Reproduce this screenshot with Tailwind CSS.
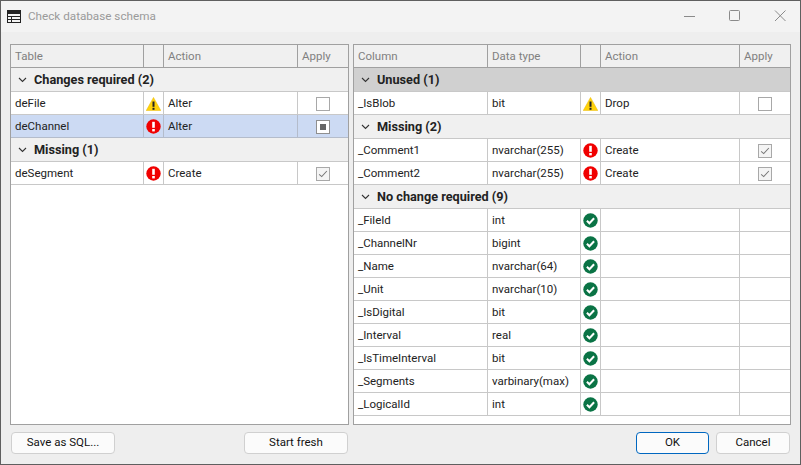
<!DOCTYPE html>
<html lang="en">
<head>
    <meta charset="UTF-8">
    <title>Check database schema</title>
    <script src="https://cdn.jsdelivr.net/npm/@tailwindcss/browser@4"></script>
</head>
<body class="bg-[#eeeeee]">
    <svg width="0" height="0" class="absolute">
        <symbol id="warn" viewBox="0 0 15 14">
            <path d="M7.500 .4 14.800 13.600H.2Z" fill="#ffd20a" stroke="#e8b900" stroke-width=".5"/>
            <rect x="6.500" y="4.500" width="2" height="5.300" fill="#222"/>
            <rect x="6.500" y="10.800" width="2" height="2" fill="#222"/>
        </symbol>
        <symbol id="err" viewBox="0 0 15 15">
            <circle cx="7.500" cy="7.500" r="7.200" fill="#f00000"/>
            <rect x="6.200" y="2.800" width="2.600" height="6" fill="#fff"/>
            <rect x="6.200" y="10" width="2.600" height="2.400" fill="#fff"/>
        </symbol>
        <symbol id="ok" viewBox="0 0 15 15">
            <circle cx="7.500" cy="7.500" r="7.200" fill="#0a7345"/>
            <path d="M3.900 7.700 6.400 10.200 11.100 5.200" fill="none" stroke="#fff" stroke-width="2"/>
        </symbol>
        <symbol id="chev" viewBox="0 0 9 6">
            <path d="M1 1 4.500 4.500 8 1" fill="none" stroke="#333" stroke-width="1.100"/>
        </symbol>
        <symbol id="tick" viewBox="0 0 14 14">
            <path d="M2.500 7.500 5.500 10 11.500 3.500" fill="none" stroke="#777" stroke-width="1.200"/>
        </symbol>
    </svg>

    <div class="w-[801px] h-[465px] box-border border border-[#5f5f5f] flex flex-col overflow-hidden text-[11.500px] text-[#222222] font-['Roboto',sans-serif]">
        <!-- title bar -->
        <div class="h-[31px] shrink-0 bg-[#f3f3f3] flex items-center pl-[6px]">
            <svg width="14" height="13" viewBox="0 0 14 13" class="mt-[-1px]">
                <rect width="14" height="13" fill="#222"/>
                <path d="M1 4h12v2H1zM1 7h3v2H1zM5 7h8v2H5zM1 10h3v2H1zM5 10h8v2H5z" fill="#f3f3f3"/>
            </svg>
            <span class="ml-[7px] mt-[1px] text-[#9a9a9a] text-[11.700px]">Check database schema</span>
            <svg width="103" height="12" viewBox="0 0 103 12" class="ml-auto mr-[13px] mt-[-2px]">
                <path d="M0 6.500H11" stroke="#8a8a8a" fill="none"/>
                <rect x="45.500" y=".5" width="10" height="10" rx="1" stroke="#8a8a8a" fill="none"/>
                <path d="M91 .5 101.500 11M101.500 .5 91 11" stroke="#8a8a8a" fill="none"/>
            </svg>
        </div>

        <div class="flex-1 flex flex-col px-[9px] pt-[12px]">
            <div class="flex gap-[4px]">
                <!-- tables -->
                <div class="w-[339px] h-[381px] box-border border border-[#a0a0a0] bg-white">
                    <div class="h-[23px] box-border border-b border-[#a0a0a0] bg-[#f0f0f0] text-[#808080] grid grid-cols-[133px_20px_134px_50px]">
                        <div class="border-r border-[#a0a0a0] pl-[4px] leading-[22px]">Table</div>
                        <div class="border-r border-[#a0a0a0]"></div>
                        <div class="border-r border-[#a0a0a0] pl-[4px] leading-[22px]">Action</div>
                        <div class="pl-[4px] leading-[22px]">Apply</div>
                    </div>
                    <div class="h-[24px] box-border border-b border-[#c8c8c8] bg-[#f0f0f0] flex items-center pl-[7px] font-bold text-[12.700px]">
                        <svg width="9" height="6"><use href="#chev"/></svg><span class="ml-[7px]">Changes required (2)</span>
                    </div>
                    <div class="h-[23px] box-border border-b border-[#c8c8c8] grid grid-cols-[133px_20px_134px_50px]">
                        <div class="border-r border-[#c8c8c8] pl-[4px] leading-[23px]">deFile</div>
                        <div class="border-r border-[#c8c8c8] flex items-center justify-center"><svg width="15" height="14"><use href="#warn"/></svg></div>
                        <div class="border-r border-[#c8c8c8] pl-[4px] leading-[23px]">Alter</div>
                        <div class="flex items-center justify-center"><div class="w-[14px] h-[14px] box-border border border-[#a8a8a8] bg-white"></div></div>
                    </div>
                    <div class="h-[23px] box-border border-b border-[#b4bccb] bg-[#ccdaf3] grid grid-cols-[133px_20px_134px_50px]">
                        <div class="border-r border-[#b4bccb] pl-[4px] leading-[23px]">deChannel</div>
                        <div class="border-r border-[#b4bccb] flex items-center justify-center"><svg width="15" height="15"><use href="#err"/></svg></div>
                        <div class="border-r border-[#b4bccb] pl-[4px] leading-[23px]">Alter</div>
                        <div class="flex items-center justify-center"><div class="w-[14px] h-[14px] box-border border border-[#8f8f8f] bg-white flex items-center justify-center"><div class="w-[6px] h-[6px] bg-[#666666]"></div></div></div>
                    </div>
                    <div class="h-[24px] box-border border-b border-[#c8c8c8] bg-[#f0f0f0] flex items-center pl-[7px] font-bold text-[12.700px]">
                        <svg width="9" height="6"><use href="#chev"/></svg><span class="ml-[7px]">Missing (1)</span>
                    </div>
                    <div class="h-[23px] box-border border-b border-[#c8c8c8] grid grid-cols-[133px_20px_134px_50px]">
                        <div class="border-r border-[#c8c8c8] pl-[4px] leading-[23px]">deSegment</div>
                        <div class="border-r border-[#c8c8c8] flex items-center justify-center"><svg width="15" height="15"><use href="#err"/></svg></div>
                        <div class="border-r border-[#c8c8c8] pl-[4px] leading-[23px]">Create</div>
                        <div class="flex items-center justify-center"><div class="w-[14px] h-[14px] box-border border border-[#a8a8a8] bg-[#f4f4f4]"><svg width="12" height="12" viewBox="0 0 14 14" class="block"><use href="#tick"/></svg></div></div>
                    </div>
                </div>

                <!-- columns -->
                <div id="columns" class="w-[438px] h-[381px] box-border border border-[#a0a0a0] bg-white">
                    <div class="h-[23px] box-border border-b border-[#a0a0a0] bg-[#f0f0f0] text-[#808080] grid grid-cols-[134px_93px_20px_139px_50px]">
                        <div class="border-r border-[#a0a0a0] pl-[4px] leading-[22px]">Column</div>
                        <div class="border-r border-[#a0a0a0] pl-[4px] leading-[22px]">Data type</div>
                        <div class="border-r border-[#a0a0a0]"></div>
                        <div class="border-r border-[#a0a0a0] pl-[4px] leading-[22px]">Action</div>
                        <div class="pl-[4px] leading-[22px]">Apply</div>
                    </div>
                    <div class="h-[24px] box-border border-b border-[#c8c8c8] bg-[#d0d0d0] flex items-center pl-[7px] font-bold text-[12.700px]">
                        <svg width="9" height="6"><use href="#chev"/></svg><span class="ml-[7px]">Unused (1)</span>
                    </div>
                    <div class="h-[23px] box-border border-b border-[#c8c8c8] grid grid-cols-[134px_93px_20px_139px_50px]">
                        <div class="border-r border-[#c8c8c8] pl-[4px] leading-[23px]">_IsBlob</div>
                        <div class="border-r border-[#c8c8c8] pl-[4px] leading-[23px]">bit</div>
                        <div class="border-r border-[#c8c8c8] flex items-center justify-center"><svg width="15" height="14"><use href="#warn"/></svg></div>
                        <div class="border-r border-[#c8c8c8] pl-[4px] leading-[23px]">Drop</div>
                        <div class="flex items-center justify-center"><div class="w-[14px] h-[14px] box-border border border-[#a8a8a8] bg-white"></div></div>
                    </div>
                    <div class="h-[24px] box-border border-b border-[#c8c8c8] bg-[#f0f0f0] flex items-center pl-[7px] font-bold text-[12.700px]">
                        <svg width="9" height="6"><use href="#chev"/></svg><span class="ml-[7px]">Missing (2)</span>
                    </div>
                    <div class="h-[23px] box-border border-b border-[#c8c8c8] grid grid-cols-[134px_93px_20px_139px_50px]">
                        <div class="border-r border-[#c8c8c8] pl-[4px] leading-[23px]">_Comment1</div>
                        <div class="border-r border-[#c8c8c8] pl-[4px] leading-[23px]">nvarchar(255)</div>
                        <div class="border-r border-[#c8c8c8] flex items-center justify-center"><svg width="15" height="15"><use href="#err"/></svg></div>
                        <div class="border-r border-[#c8c8c8] pl-[4px] leading-[23px]">Create</div>
                        <div class="flex items-center justify-center"><div class="w-[14px] h-[14px] box-border border border-[#a8a8a8] bg-[#f4f4f4]"><svg width="12" height="12" viewBox="0 0 14 14" class="block"><use href="#tick"/></svg></div></div>
                    </div>
                    <div class="h-[23px] box-border border-b border-[#c8c8c8] grid grid-cols-[134px_93px_20px_139px_50px]">
                        <div class="border-r border-[#c8c8c8] pl-[4px] leading-[23px]">_Comment2</div>
                        <div class="border-r border-[#c8c8c8] pl-[4px] leading-[23px]">nvarchar(255)</div>
                        <div class="border-r border-[#c8c8c8] flex items-center justify-center"><svg width="15" height="15"><use href="#err"/></svg></div>
                        <div class="border-r border-[#c8c8c8] pl-[4px] leading-[23px]">Create</div>
                        <div class="flex items-center justify-center"><div class="w-[14px] h-[14px] box-border border border-[#a8a8a8] bg-[#f4f4f4]"><svg width="12" height="12" viewBox="0 0 14 14" class="block"><use href="#tick"/></svg></div></div>
                    </div>
                    <div class="h-[24px] box-border border-b border-[#c8c8c8] bg-[#f0f0f0] flex items-center pl-[7px] font-bold text-[12.700px]">
                        <svg width="9" height="6"><use href="#chev"/></svg><span class="ml-[7px]">No change required (9)</span>
                    </div>
                    <div id="unchanged"></div>
                </div>
            </div>

            <div class="flex mt-[7px] px-[1px] h-[22px]">
                <button class="w-[104px] h-[22px] box-border border border-[#d0d0d0] rounded-[4px] bg-[#fbfbfb] text-[#111111]">Save as SQL...</button>
                <button class="w-[104px] h-[22px] box-border border border-[#d0d0d0] rounded-[4px] bg-[#fbfbfb] text-[#111111] ml-[129px]">Start fresh</button>
                <button class="w-[73px] h-[22px] box-border border border-[#0067c0] rounded-[4px] bg-[#fbfbfb] text-[#111111] ml-auto">OK</button>
                <button class="w-[74px] h-[22px] box-border border border-[#d0d0d0] rounded-[4px] bg-[#fbfbfb] text-[#111111] ml-[7px]">Cancel</button>
            </div>
        </div>
    </div>

    <script>
        const unchanged = [
            ["_FileId", "int"], ["_ChannelNr", "bigint"], ["_Name", "nvarchar(64)"],
            ["_Unit", "nvarchar(10)"], ["_IsDigital", "bit"], ["_Interval", "real"],
            ["_IsTimeInterval", "bit"], ["_Segments", "varbinary(max)"], ["_LogicalId", "int"]
        ];
        document.getElementById("unchanged").innerHTML = unchanged.map(([name, type]) => `
            <div class="h-[23px] box-border border-b border-[#c8c8c8] grid grid-cols-[134px_93px_20px_139px_50px]">
                <div class="border-r border-[#c8c8c8] pl-[4px] leading-[23px]">${name}</div>
                <div class="border-r border-[#c8c8c8] pl-[4px] leading-[23px]">${type}</div>
                <div class="border-r border-[#c8c8c8] flex items-center justify-center"><svg width="15" height="15"><use href="#ok"/></svg></div>
                <div class="border-r border-[#c8c8c8]"></div>
                <div></div>
            </div>`).join("");
    </script>
</body>
</html>
